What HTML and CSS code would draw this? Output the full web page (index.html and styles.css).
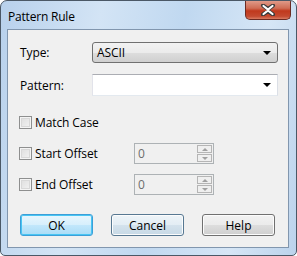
FILE: index.html
```html
<!DOCTYPE html>
<html>
<head>
<meta charset="utf-8">
<link rel="stylesheet" href="styles.css">
</head>
<body>
<div class="window">
  <div class="titlebar">
    <span class="title">Pattern Rule</span>
    <div class="close">
      <svg width="16" height="12" viewBox="0 0 16 12"><path d="M3 1.5 L8 5 L13 1.5 M3 10.5 L8 7 L13 10.5" fill="none" stroke="#3b3b3b" stroke-width="4" stroke-linecap="round"/><path d="M3.5 2 L8 5.5 L12.5 2 M3.5 10 L8 6.5 L12.5 10" fill="none" stroke="#fff" stroke-width="2.2" stroke-linecap="round"/></svg>
    </div>
  </div>
  <div class="client">
    <div class="row field">
      <span class="label">Type:</span>
      <div class="combo combo-btn"><span>ASCII</span><span class="arrow"></span></div>
    </div>
    <div class="row field second">
      <span class="label">Pattern:</span>
      <div class="combo combo-edit"><span></span><span class="arrow"></span></div>
    </div>
    <div class="row check first-check">
      <span class="box"></span><span class="ctext">Match Case</span>
    </div>
    <div class="row check spaced">
      <span class="box"></span><span class="ctext wide">Start Offset</span>
      <div class="spin"><span class="val">0</span><div class="spinbtns"><span class="sb up"></span><span class="sb down"></span></div></div>
    </div>
    <div class="row check spaced">
      <span class="box"></span><span class="ctext wide">End Offset</span>
      <div class="spin"><span class="val">0</span><div class="spinbtns"><span class="sb up"></span><span class="sb down"></span></div></div>
    </div>
    <div class="buttons">
      <button class="btn default">OK</button>
      <button class="btn hover">Cancel</button>
      <button class="btn">Help</button>
    </div>
  </div>
</div>
</body>
</html>
```
FILE: styles.css
```css
html, body { margin: 0; padding: 0; background: #fff; }
body { font-family: "Open Sans", "Noto Sans", sans-serif; font-size: 12px; color: #000; letter-spacing: -0.1px; }
.window {
  width: 297px; height: 256px; box-sizing: border-box;
  border: 1px solid #4b5866; border-radius: 7px 7px 5px 5px;
  background: linear-gradient(100deg, #b8d1ec 0%, #d3e4f5 30%, #c0d8f0 55%, #d6e6f6 80%, #bcd3ec 100%);
  display: flex; flex-direction: column; overflow: hidden;
}
.titlebar { height: 28px; display: flex; align-items: flex-start; }
.title { margin: 7px 0 0 7px; font-size: 12px; letter-spacing: -0.2px; color: #000; }
.close {
  margin-left: auto; margin-right: 5px; width: 46px; height: 19px; box-sizing: border-box;
  border: 1px solid #6b2b23; border-top: none; border-radius: 0 0 5px 5px;
  background: linear-gradient(#e09a88 0%, #cf6d55 40%, #c0391d 55%, #c44a30 85%, #d97c62 100%);
  display: flex; align-items: center; justify-content: center;
}
.client {
  margin: 0 7px 7px 6px; flex: 1; background: #f0f0f0;
  border: 1px solid #8196ae; box-sizing: border-box;
  display: flex; flex-direction: column; padding: 12px 10px 11px 11px;
}
.row { display: flex; align-items: center; }
.field { height: 21px; }
.field.second { margin-top: 11px; height: 22px; }
.label { width: 72px; padding-left: 1px; }
.combo {
  width: 186px; height: 100%; box-sizing: border-box; display: flex; align-items: center;
  justify-content: space-between; padding: 0 6px 0 4px;
}
.combo-btn {
  border: 1px solid #707070; border-radius: 3px;
  background: linear-gradient(#f2f2f2 0%, #ebebeb 50%, #dddddd 51%, #cfcfcf 100%);
}
.combo-edit { background: #fff; border: 1px solid #abadb3; border-color: #abadb3 #dbdfe6 #e3e9ef #e2e3ea; }
.arrow { width: 0; height: 0; border-left: 4px solid transparent; border-right: 4px solid transparent; border-top: 4px solid #000; }
.check { height: 21px; }
.first-check { margin-top: 16px; }
.spaced { margin-top: 10px; }
.box {
  width: 13px; height: 13px; box-sizing: border-box; border: 1px solid #8e8f8f;
  background: linear-gradient(135deg, #dcdcdc, #f4f4f4);
  box-shadow: inset 0 0 0 1px #f4f4f4, inset 0 0 0 2px #d8d8d8;
}
.ctext { margin-left: 3px; }
.ctext.wide { width: 99px; }
.spin {
  width: 80px; height: 21px; box-sizing: border-box; border: 1px solid #adb2b5;
  display: flex; align-items: center; justify-content: space-between; padding: 0 1px 0 3px;
}
.val { color: #6d6d6d; }
.spinbtns { display: flex; flex-direction: column; gap: 1px; }
.sb {
  width: 15px; height: 8px; box-sizing: border-box; border: 1px solid #b5b5b5; background: #efefef;
  display: flex; align-items: center; justify-content: center;
}
.sb::after { content: ""; width: 0; height: 0; border-left: 3px solid transparent; border-right: 3px solid transparent; }
.up::after { border-bottom: 3px solid #a0a0a0; }
.down::after { border-top: 3px solid #a0a0a0; }
.buttons { margin-top: auto; display: flex; justify-content: space-between; padding: 0 3px 0 1px; }
.btn {
  width: 73px; height: 22px; font: inherit; font-size: 12px; color: #000; padding: 0;
  border: 1px solid #707070; border-radius: 3px;
  background: linear-gradient(#f2f2f2 0%, #ebebeb 50%, #dddddd 51%, #cfcfcf 100%);
  box-shadow: inset 0 0 0 1px #fcfcfc;
}
.btn.default {
  border-color: #3c9fd8;
  background: linear-gradient(#e8f6fd 0%, #d6effc 50%, #c2e7fb 51%, #a9dcf6 100%);
  box-shadow: inset 0 0 0 1px #48c5f3;
}
.btn.hover {
  border-color: #577892;
  box-shadow: inset 0 0 0 1px #fcfcfc;
  background: linear-gradient(#eef4f8 0%, #e3edf4 50%, #d4e2ec 51%, #c7d9e6 100%);
}
```
